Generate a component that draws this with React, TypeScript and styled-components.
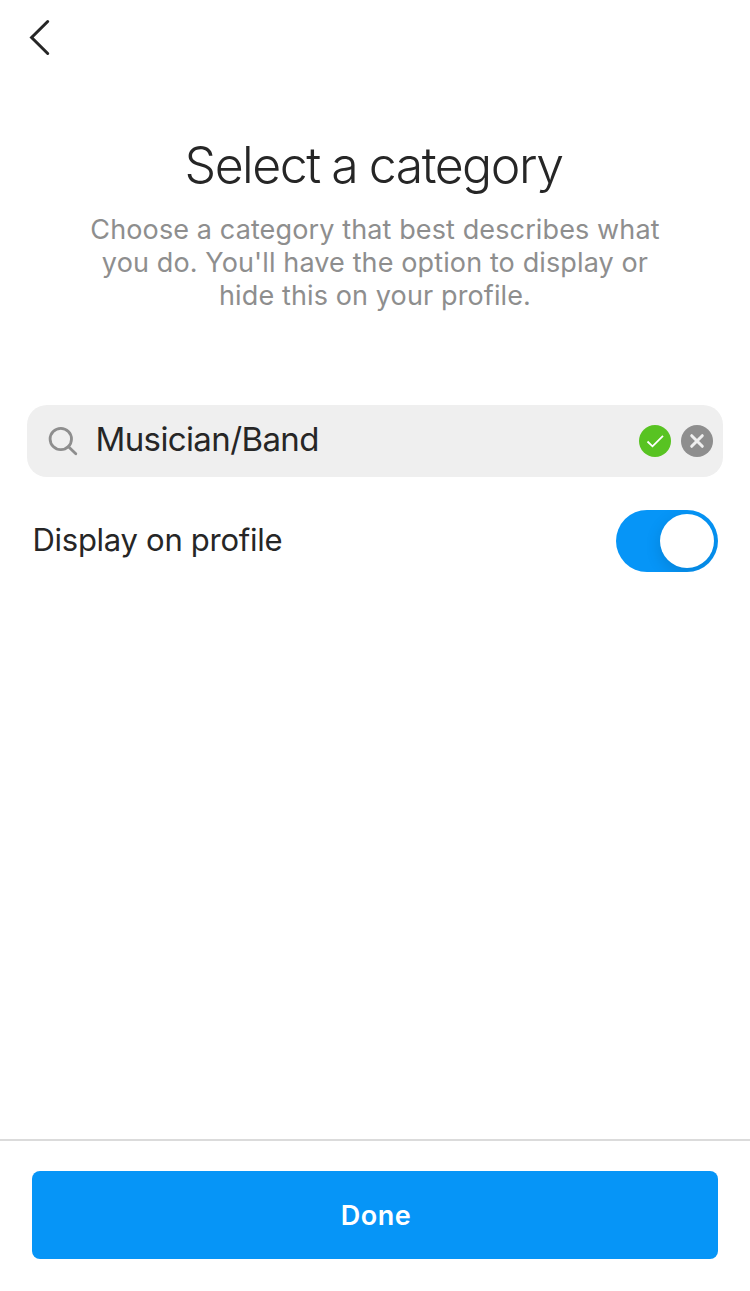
import React, { useState } from "react";
import styled, { createGlobalStyle } from "styled-components";

const GlobalStyle = createGlobalStyle`
  * { box-sizing: border-box; }
  body { margin: 0; background: #fff; }
  button, input { font: inherit; border: 0; padding: 0; background: none; }
`;

const Screen = styled.div`
  width: 750px;
  height: 1291px;
  display: flex;
  flex-direction: column;
  background: #fff;
  color: #262626;
  font-family: Inter, "Liberation Sans", sans-serif;
  overflow: hidden;
`;
const TopBar = styled.header`
  height: 76px;
  padding: 18px 0 0 27px;
`;
const BackButton = styled.button`
  display: block;
  width: 26px;
  height: 40px;
`;
const Intro = styled.section`
  height: 329px;
  padding-top: 57px;
  text-align: center;
`;
const Title = styled.h1`
  margin: 0 3px 0 0;
  font-size: 50px;
  line-height: 64px;
  font-weight: 320;
  letter-spacing: -1.5px;
  word-spacing: -1px;
`;
const Description = styled.p`
  margin: 16px 0 0;
  color: #8e8e8e;
  font-size: 27px;
  line-height: 33px;
  letter-spacing: 0.12px;
`;
const SearchBox = styled.div`
  flex: none;
  display: flex;
  align-items: center;
  height: 72px;
  margin: 0 27px;
  padding: 0 10px 0 20px;
  border-radius: 20px;
  background: #efefef;
`;
const Query = styled.span`
  flex: 1;
  margin: -5px 0 0 16.5px;
  font-size: 33px;
  line-height: 40px;
  letter-spacing: -0.62px;
`;
const Badge = styled.span<{ $color: string }>`
  display: flex;
  width: 32px;
  height: 32px;
  margin-left: 10px;
  border-radius: 50%;
  background: ${(p) => p.$color};
`;
const SettingRow = styled.div`
  display: flex;
  align-items: center;
  justify-content: space-between;
  height: 62px;
  margin: 33px 32px 0 32.5px;
`;
const SettingLabel = styled.span`
  margin-bottom: 2px;
  font-size: 31px;
  line-height: 40px;
  letter-spacing: -0.28px;
`;
const Toggle = styled.button<{ $on: boolean }>`
  display: flex;
  justify-content: ${(p) => (p.$on ? "flex-end" : "flex-start")};
  width: 102px;
  height: 62px;
  padding: 4px;
  border-radius: 31px;
  background: ${(p) => (p.$on ? "#0695f7" : "#dbdbdb")};
  overflow: hidden;
`;
const Knob = styled.span`
  width: 54px;
  height: 54px;
  border-radius: 50%;
  background: #fff;
  box-shadow: 0 5px 16px rgba(0, 0, 0, 0.13);
`;
const Footer = styled.footer`
  height: 152px;
  margin-top: auto;
  padding: 30px 32px 0;
  border-top: 2px solid #dbdbdb;
`;
const DoneButton = styled.button`
  display: block;
  width: 100%;
  height: 88px;
  padding-left: 2px;
  border-radius: 8px;
  background: #0695f7;
  color: #fff;
  font-size: 27px;
  font-weight: 580;
  letter-spacing: 0.5px;
`;

export default function App() {
  const [on, setOn] = useState(true);
  return (
    <Screen>
      <GlobalStyle />
      <TopBar>
        <BackButton aria-label="Back">
          <svg width="26" height="40" viewBox="0 0 26 40" fill="none" stroke="#262626" strokeWidth="3" strokeLinecap="round">
            <path d="M20.7 3.500 4.600 19.500l16.100 16" />
          </svg>
        </BackButton>
      </TopBar>
      <Intro>
        <Title>Select a category</Title>
        <Description>
          Choose a category that best describes what<br />
          you do. You'll have the option to display or<br />
          hide this on your profile.
        </Description>
      </Intro>
      <SearchBox>
        <svg width="32" height="32" viewBox="0 0 32 32" fill="none" stroke="#8e8e8e" strokeWidth="2.800" strokeLinecap="round">
          <circle cx="13.800" cy="14" r="10.700" />
          <path d="m21.500 21.700 7.300 7.100" />
        </svg>
        <Query>Musician/Band</Query>
        <Badge $color="#58c322">
          <svg width="32" height="32" fill="none" stroke="#fff" strokeWidth="1.800"><path d="m8.500 16.500 5 4.800L24 10.800" /></svg>
        </Badge>
        <Badge $color="#8e8e8e">
          <svg width="32" height="32" fill="none" stroke="#efefef" strokeWidth="3" strokeLinecap="round"><path d="m10.700 10.700 10.600 10.600M21.300 10.700 10.700 21.300" /></svg>
        </Badge>
      </SearchBox>
      <SettingRow>
        <SettingLabel>Display on profile</SettingLabel>
        <Toggle $on={on} role="switch" aria-checked={on} aria-label="Display on profile" onClick={() => setOn(!on)}>
          <Knob />
        </Toggle>
      </SettingRow>
      <Footer>
        <DoneButton>Done</DoneButton>
      </Footer>
    </Screen>
  );
}
